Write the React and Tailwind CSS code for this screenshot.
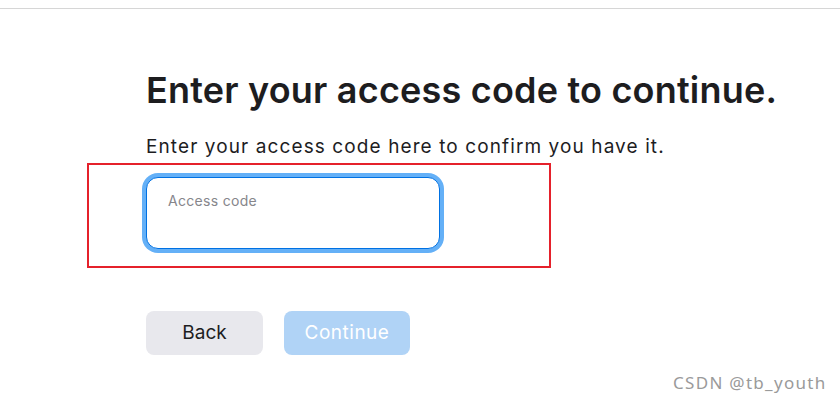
import React from "react";

export default function App() {
  return (
    <div className="relative w-[840px] h-[407px] bg-white overflow-hidden" style={{ fontFamily: "Inter, 'Liberation Sans', sans-serif" }}>
      <div className="h-[8px]" />
      <div className="h-px bg-[#d6d6d6]" />
      <div className="pl-[146px] pt-[61px] flex flex-col">
        <h1 className="text-[36px] leading-[40px] font-semibold text-[#1d1d1f] tracking-[0.2px] whitespace-nowrap">
          Enter your access code to continue.
        </h1>
        <p className="mt-[25px] text-[19px] leading-[24px] text-[#1d1d1f] tracking-[1.1px] whitespace-nowrap">
          Enter your access code here to confirm you have it.
        </p>
        <div className="relative mt-[18px] w-[294px]">
          <div className="absolute left-[-59px] top-[-14px] w-[464px] h-[105px] border-2 border-[#e5212b] pointer-events-none" />
          <div className="h-[72px] w-[294px] rounded-[12px] border border-[#0071e3] ring-4 ring-[#64b0f7] bg-white pl-[21px] pt-[10px]">
            <span className="text-[14px] leading-[20px] text-[#86868b] tracking-[0.3px]">Access code</span>
          </div>
        </div>
        <div className="mt-[62px] flex gap-[21px]">
          <button className="w-[117px] h-[44px] rounded-[8px] bg-[#e8e8ed] text-[19px] text-[#1d1d1f]">Back</button>
          <button className="w-[126px] h-[44px] rounded-[8px] bg-[#b0d3f6] text-[19px] text-white tracking-[0.5px]">Continue</button>
        </div>
      </div>
      <div className="absolute left-[673px] top-[372px] text-[17px] leading-[22px] text-[#9a9a9a] tracking-[1.3px]" style={{ fontFamily: "'Noto Sans', sans-serif" }}>
        CSDN @tb_youth
      </div>
    </div>
  );
}
